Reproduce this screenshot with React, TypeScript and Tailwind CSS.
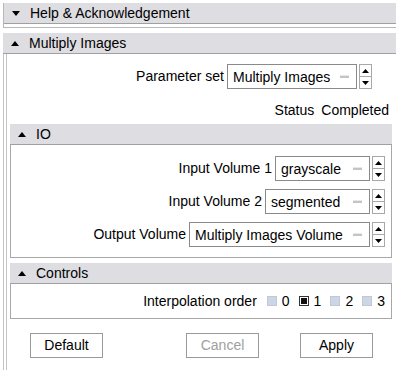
import React from 'react';

const Tri: React.FC<{ up?: boolean }> = ({ up }) => (
  <svg width="8" height="5" viewBox="0 0 8 5" className="shrink-0">
    {up ? <path d="M0 5 L4 0 L8 5 Z" fill="#000" /> : <path d="M0 0 L4 5 L8 0 Z" fill="#000" />}
  </svg>
);

const Header: React.FC<{ title: string; up?: boolean; className?: string }> = ({ title, up, className = '' }) => (
  <div className={`flex items-center h-[21px] bg-[#dddde2] border-b border-[#a0a0a0] pl-[8px] gap-[10px] ${className}`}>
    <Tri up={up} />
    <span className="text-black leading-none">{title}</span>
  </div>
);

const Spinner: React.FC = () => (
  <div className="flex flex-col w-[13px] h-[25px] ml-[2px] border border-[#a8a8a8] bg-white">
    <div className="flex-1 flex items-center justify-center border-b border-[#a8a8a8]">
      <svg width="7" height="4" viewBox="0 0 7 4"><path d="M0 4 L3.5 0 L7 4 Z" fill="#000" /></svg>
    </div>
    <div className="flex-1 flex items-center justify-center">
      <svg width="7" height="4" viewBox="0 0 7 4"><path d="M0 0 L3.5 4 L7 0 Z" fill="#000" /></svg>
    </div>
  </div>
);

const Combo: React.FC<{ value: string; width: string }> = ({ value, width }) => (
  <div className="flex items-center">
    <div className={`flex items-center justify-between h-[25px] border border-[#8a8a8a] bg-white pl-[5px] pr-[7px] ${width}`}>
      <span className="leading-none">{value}</span>
      <span className="block w-[9px] h-[3px] bg-[#c4c4c4] border-t border-[#e8e8e8]" />
    </div>
    <Spinner />
  </div>
);

const Row: React.FC<{ label: string; value: string; width: string }> = ({ label, value, width }) => (
  <div className="flex items-center justify-end gap-[3px]">
    <span>{label}</span>
    <Combo value={value} width={width} />
  </div>
);

const Check: React.FC<{ on?: boolean; label: string }> = ({ on, label }) => (
  <div className="flex items-center gap-[5px]">
    <span className={`flex items-center justify-center w-[10px] h-[10px] border ${on ? 'border-[#333] bg-white' : 'border-[#c0c8d8] bg-[#cdd6e4]'}`}>
      {on && <span className="block w-[6px] h-[6px] bg-[#111]" />}
    </span>
    <span>{label}</span>
  </div>
);

const Btn: React.FC<{ label: string; disabled?: boolean; className?: string }> = ({ label, disabled, className = '' }) => (
  <div className={`flex items-center justify-center w-[73px] h-[25px] border border-[#9a9a9a] bg-white ${disabled ? 'text-[#a0a0a0]' : 'text-black'} ${className}`}>
    {label}
  </div>
);

export default function App() {
  return (
    <div className="w-[396px] h-[370px] bg-white overflow-hidden text-[14px] text-black pt-[3px] pl-[3px]" style={{ fontFamily: '"Liberation Sans", Arial, sans-serif' }}>
      {/* Help & Acknowledgement (collapsed) */}
      <div className="border-l border-b border-[#b8b8b8] pb-[3px]">
        <Header title="Help & Acknowledgement" />
      </div>

      {/* Multiply Images */}
      <div className="mt-[5px]">
        <Header title="Multiply Images" up />
        <div className="flex h-[316px] border-l border-[#c4c4c4]">
          <div className="flex-1 ml-[2px] border-l border-[#c4c4c4] pl-[3px] pr-[4px] flex flex-col">
            {/* Parameter set */}
            <div className="flex items-center justify-end gap-[3px] mt-[10px] pr-[20px]">
              <span>Parameter set</span>
              <Combo value="Multiply Images" width="w-[130px]" />
            </div>
            <div className="flex justify-end gap-[7px] mt-[11px] pr-[3px]">
              <span>Status</span>
              <span>Completed</span>
            </div>

            {/* IO */}
            <div className="mt-[3px]">
              <Header title="IO" up />
              <div className="border border-t-0 border-[#a8a8a8] h-[113px] flex flex-col gap-[8px] pt-[11px] pr-[6px]">
                <Row label="Input Volume 1" value="grayscale" width="w-[95px]" />
                <Row label="Input Volume 2" value="segmented" width="w-[105px]" />
                <Row label="Output Volume" value="Multiply Images Volume" width="w-[181px]" />
              </div>
            </div>

            {/* Controls */}
            <div className="mt-[5px]">
              <Header title="Controls" up />
              <div className="border border-t-0 border-[#a8a8a8] h-[35px] flex items-center justify-end gap-[9px] pr-[6px]">
                <span className="mr-[1px]">Interpolation order</span>
                <Check label="0" />
                <Check on label="1" />
                <Check label="2" />
                <Check label="3" />
              </div>
            </div>

            {/* Buttons */}
            <div className="flex mt-[14px] pl-[20px]">
              <Btn label="Default" />
              <Btn label="Cancel" disabled className="ml-[83px]" />
              <Btn label="Apply" className="ml-[41px]" />
            </div>
          </div>
        </div>
        <div className="border-t border-[#c4c4c4]" />
      </div>
    </div>
  );
}
